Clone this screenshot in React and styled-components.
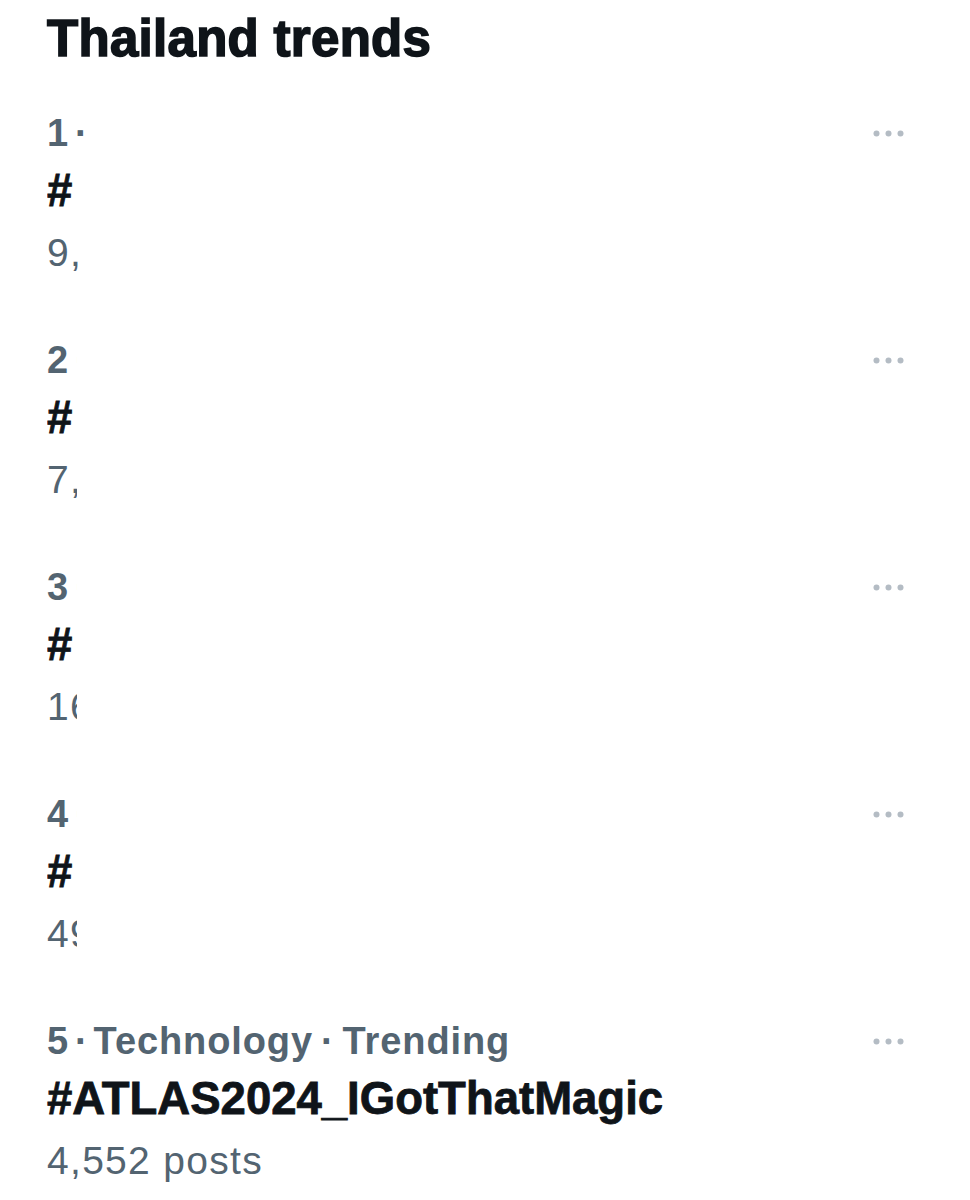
import React from "react";
import styled, { createGlobalStyle, css } from "styled-components";

const GlobalStyle = createGlobalStyle`
  body {
    margin: 0;
    background: #ffffff;
    font-family: "Liberation Sans", Arial, sans-serif;
  }
`;

const Page = styled.div`
  padding: 9px 66px 0 47px;
`;

const Title = styled.h1`
  margin: 0;
  font-size: 51px;
  line-height: 60px;
  font-weight: 700;
  letter-spacing: 0.3px;
  color: #0f1419;
  -webkit-text-stroke: 1.6px #0f1419;
`;

const List = styled.div`
  margin-top: 38px;
  display: flex;
  flex-direction: column;
  gap: 51px;
`;

const Row = styled.div`
  display: flex;
  justify-content: space-between;
  align-items: flex-start;
`;

const Body = styled.div`
  display: flex;
  flex-direction: column;
  min-width: 0;
  white-space: nowrap;
  ${p =>
    p.$clip &&
    css`
      max-width: ${p.$clip}px;
      overflow: hidden;
    `}
`;

const Meta = styled.div`
  font-size: 38px;
  line-height: 52px;
  font-weight: 700;
  letter-spacing: 0.9px;
  color: #536471;
`;

const Sep = styled.span`
  margin: 0 ${p => (p.$tight ? 5 : 8)}px 0 ${p => (p.$tight ? 6 : 8)}px;
`;

const Tag = styled.div`
  margin-top: 4px;
  font-size: 45.5px;
  line-height: 56px;
  font-weight: 700;
  color: #0f1419;
  -webkit-text-stroke: 0.8px #0f1419;
`;

const Posts = styled.div`
  margin-top: 4px;
  font-size: 39px;
  line-height: 60px;
  letter-spacing: 1.3px;
  color: #536471;
`;

const More = styled.div`
  height: 52px;
  display: flex;
  align-items: center;
  flex-shrink: 0;
`;

const Dots = () => (
  <svg width="31" height="7" viewBox="0 0 31 7">
    <circle cx="3.5" cy="3.5" r="3" fill="#b4bcc4" />
    <circle cx="15.5" cy="3.5" r="3" fill="#b4bcc4" />
    <circle cx="27.5" cy="3.5" r="3" fill="#b4bcc4" />
  </svg>
);

const trends = [
  { rank: 1, meta: "Trending", tag: "#", posts: "9,", clip: 37 },
  { rank: 2, meta: "Trending", tag: "#", posts: "7,5", clip: 30 },
  { rank: 3, meta: "Trending", tag: "#", posts: "16", clip: 30 },
  { rank: 4, meta: "Trending", tag: "#", posts: "49", clip: 30 },
  {
    rank: 5,
    meta: ["Technology", "Trending"],
    tag: "#ATLAS2024_IGotThatMagic",
    posts: "4,552 posts"
  }
];

const App = () => (
  <Page>
    <GlobalStyle />
    <Title>Thailand trends</Title>
    <List>
      {trends.map(t => {
        const parts = Array.isArray(t.meta) ? t.meta : [t.meta];
        return (
          <Row key={t.rank}>
            <Body $clip={t.clip}>
              <Meta>
                {t.rank}
                {parts.map((p, i) => (
                  <React.Fragment key={p}>
                    <Sep $tight={i === 0}>·</Sep>
                    {p}
                  </React.Fragment>
                ))}
              </Meta>
              <Tag>{t.tag}</Tag>
              <Posts>{t.posts}</Posts>
            </Body>
            <More>
              <Dots />
            </More>
          </Row>
        );
      })}
    </List>
  </Page>
);

export default App;
